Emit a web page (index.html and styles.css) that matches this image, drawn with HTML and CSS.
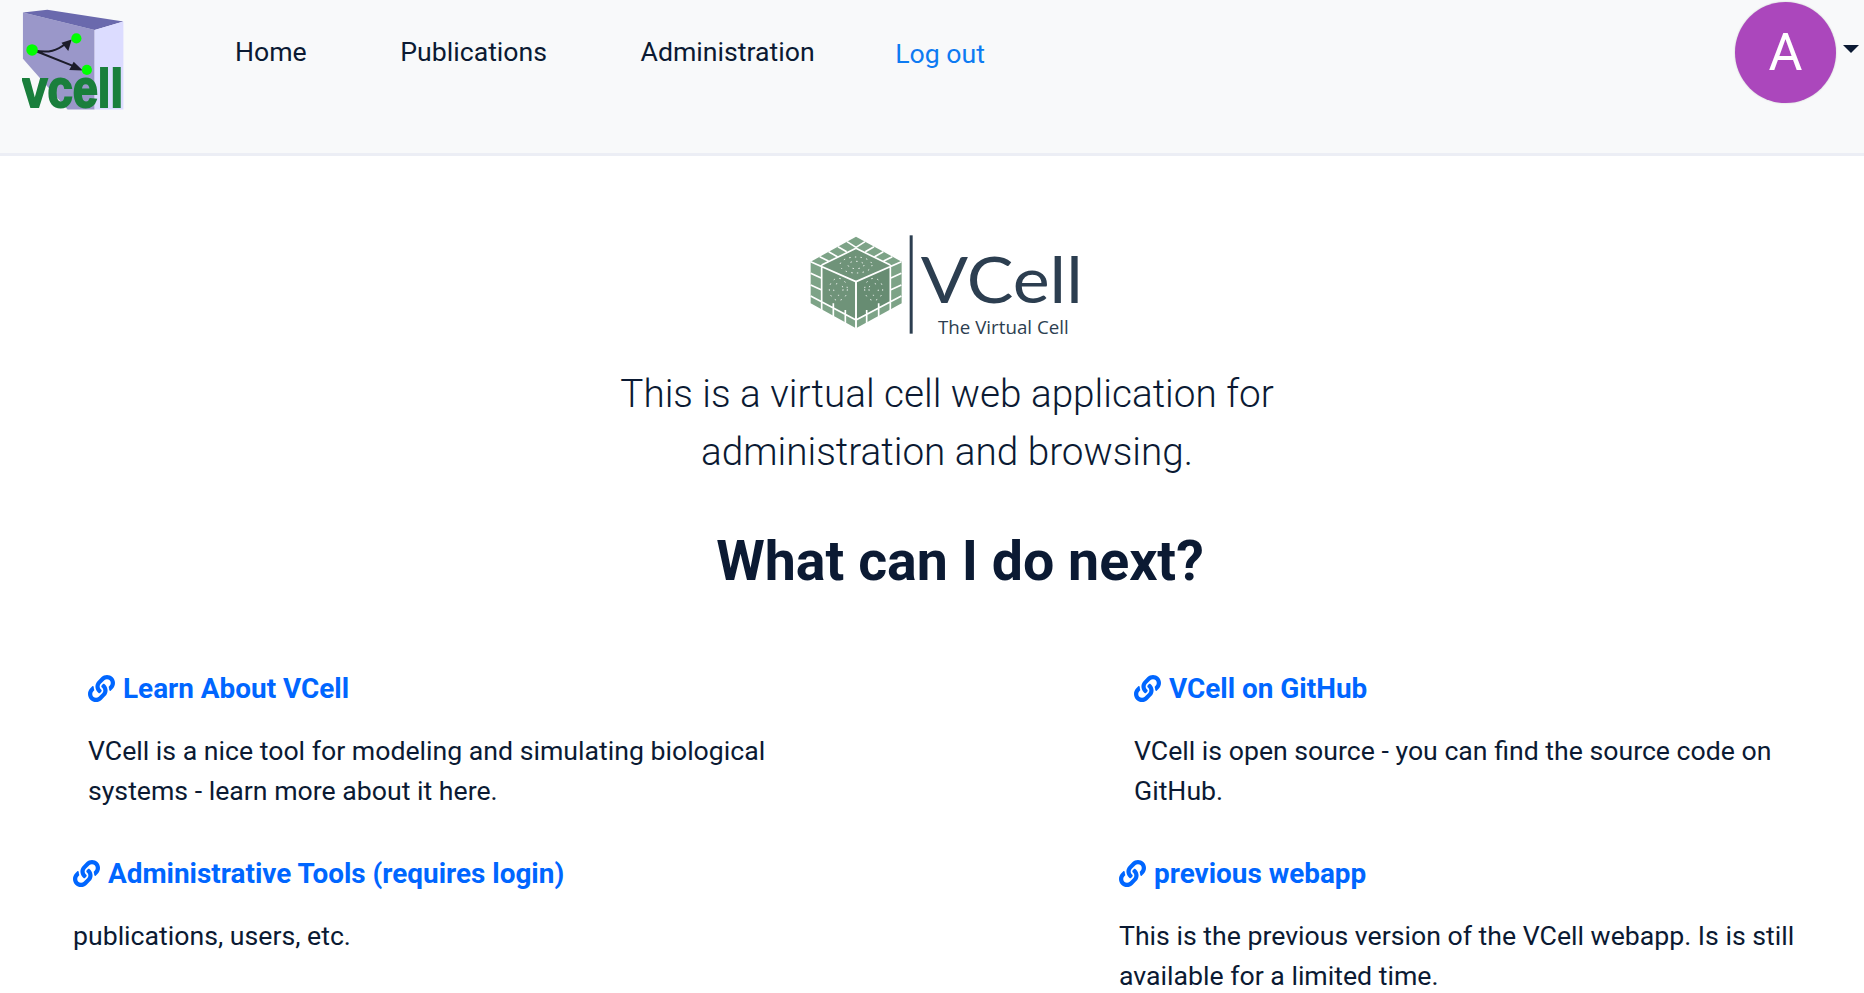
FILE: index.html
```html
<!DOCTYPE html>
<html lang="en">
<head>
    <meta charset="UTF-8">
    <meta name="viewport" content="width=device-width, initial-scale=1.0">
    <title>VCell</title>
    <link rel="stylesheet" href="styles.css">
</head>
<body>

    <svg class="icon-defs" width="0" height="0">
        <symbol id="link-icon" viewBox="0 0 512 512">
            <path fill="currentColor" d="M326.612 185.391c59.747 59.809 58.927 155.698.36 214.59-.11.12-.24.25-.36.37l-67.2 67.2c-59.27 59.27-155.699 59.262-214.96 0-59.27-59.26-59.27-155.7 0-214.96l37.106-37.106c9.84-9.84 26.786-3.3 27.294 10.606.648 17.722 3.826 35.527 9.69 52.721 1.986 5.822.567 12.262-3.783 16.612l-13.087 13.087c-28.026 28.026-28.905 73.66-1.155 101.96 28.024 28.579 74.086 28.749 102.325.51l67.2-67.19c28.191-28.191 28.073-73.757 0-101.83-3.701-3.694-7.429-6.564-10.341-8.569a16.037 16.037 0 0 1-6.947-12.606c-.396-10.567 3.348-21.456 11.698-29.806l21.054-21.055c5.521-5.521 14.182-6.199 20.584-1.731a152.482 152.482 0 0 1 20.522 17.197zM467.547 44.449c-59.261-59.262-155.69-59.27-214.96 0l-67.2 67.2c-.12.12-.25.25-.36.37-58.566 58.892-59.387 154.781.36 214.59a152.454 152.454 0 0 0 20.521 17.196c6.402 4.468 15.064 3.789 20.584-1.731l21.054-21.055c8.35-8.35 12.094-19.239 11.698-29.806a16.037 16.037 0 0 0-6.947-12.606c-2.912-2.005-6.64-4.875-10.341-8.569-28.073-28.073-28.191-73.639 0-101.83l67.2-67.19c28.239-28.239 74.3-28.069 102.325.51 27.75 28.3 26.872 73.934-1.155 101.96l-13.087 13.087c-4.35 4.35-5.769 10.79-3.783 16.612 5.864 17.194 9.042 34.999 9.69 52.721.509 13.906 17.454 20.446 27.294 10.606l37.106-37.106c59.271-59.259 59.271-155.699.001-214.959z"/>
        </symbol>
    </svg>

    <nav class="navbar">
        <svg class="brand" viewBox="66 28 300 340" width="102" height="115">
            <polygon fill="#9a97c9" points="68,38 280,90 280,325 200,325 68,175"/>
            <polygon fill="#6a69ad" points="68,38 140,30 365,65 280,90"/>
            <polygon fill="#dcdcff" points="280,90 365,65 365,325 280,325"/>
            <path fill="none" stroke="#1c1c2a" stroke-width="6" d="M100 150 C145 160 170 150 195 130 M100 150 L225 200"/>
            <polygon fill="#1c1c2a" points="212,118 202,152 182,128"/>
            <polygon fill="#1c1c2a" points="245,210 205,208 218,184"/>
            <circle fill="#00ff00" cx="95" cy="149" r="17"/>
            <circle fill="#00ff00" cx="226" cy="115" r="15"/>
            <circle fill="#00ff00" cx="257" cy="208" r="15"/>
            <text class="brand-text" x="66" y="267" transform="scale(1 1.19)">vcell</text>
        </svg>
        <div class="nav-links">
            <a class="nav-link" href="#">Home</a>
            <a class="nav-link" href="#">Publications</a>
            <a class="nav-link" href="#">Administration</a>
            <a class="nav-link logout" href="#">Log out</a>
        </div>
        <div class="user-menu">
            <div class="avatar">A</div>
            <span class="caret"></span>
        </div>
    </nav>

    <main class="content">
        <svg class="hero-logo" viewBox="0 0 960 390" width="320" height="130">
            <defs>
                <g id="cube-half">
                    <path fill="none" stroke="#fff" stroke-width="5" d="M228 85 L125 135 M92 125 L228 185 L228 325 M125 135 L125 270 M92 228 L228 300 M201 65 L228 82 M174 80 L200 95 M146 95 L172 110 M119 110 L145 123 M92 160 L125 175 M92 195 L125 210 M160 250 L160 290 M196 270 L196 310"/>
                    <ellipse cx="175" cy="208" rx="27" ry="33" fill="none" stroke="#fff" stroke-width="3" stroke-dasharray="4 14"/>
                    <ellipse cx="175" cy="208" rx="14" ry="18" fill="none" stroke="#fff" stroke-width="3" stroke-dasharray="4 18"/>
                </g>
            </defs>
            <polygon fill="#7da387" points="228,50 365,125 365,250 228,325 92,250 92,125"/>
            <polygon fill="#6f9379" points="125,135 228,185 228,297 125,245"/>
            <polygon fill="#678c72" points="331,135 228,185 228,297 331,245"/>
            <polygon fill="#6f9379" points="228,85 331,135 228,185 125,135"/>
            <use href="#cube-half"/>
            <use href="#cube-half" transform="matrix(-1 0 0 1 456 0)"/>
            <ellipse cx="228" cy="135" rx="48" ry="24" fill="none" stroke="#fff" stroke-width="3" stroke-dasharray="4 13"/>
            <ellipse cx="228" cy="135" rx="24" ry="11" fill="none" stroke="#fff" stroke-width="3" stroke-dasharray="4 13"/>
            <rect x="389" y="46" width="9" height="295" fill="#2c3e50"/>
            <text class="hero-logo-name" x="422" y="250" textLength="486" lengthAdjust="spacingAndGlyphs">VCell</text>
            <text class="hero-logo-sub" x="474" y="343" textLength="392" lengthAdjust="spacingAndGlyphs">The Virtual Cell</text>
        </svg>

        <p class="intro">This is a virtual cell web application for<br>administration and browsing.</p>

        <h1 class="next-title">What can I do next?</h1>

        <div class="cards">
            <section class="card card-inset">
                <h3 class="card-title"><svg class="link-icon"><use href="#link-icon"/></svg><a href="#">Learn About VCell</a></h3>
                <p>VCell is a nice tool for modeling and simulating biological systems - learn more about it here.</p>
            </section>
            <section class="card card-inset">
                <h3 class="card-title"><svg class="link-icon"><use href="#link-icon"/></svg><a href="#">VCell on GitHub</a></h3>
                <p>VCell is open source - you can find the source code on GitHub.</p>
            </section>
            <section class="card">
                <h3 class="card-title"><svg class="link-icon"><use href="#link-icon"/></svg><a href="#">Administrative Tools (requires login)</a></h3>
                <p>publications, users, etc.</p>
            </section>
            <section class="card">
                <h3 class="card-title"><svg class="link-icon"><use href="#link-icon"/></svg><a href="#">previous webapp</a></h3>
                <p>This is the previous version of the VCell webapp. Is is still available for a limited time.</p>
            </section>
        </div>
    </main>

</body>
</html>
```

FILE: styles.css
```css
html, body {
    height: 100%;
    overflow: hidden;
}

body {
    margin: 0;
    font-family: Roboto, sans-serif;
    color: #0b1a33;
    background-color: #ffffff;
}

a {
    text-decoration: none;
}

.icon-defs {
    position: absolute;
}

.navbar {
    display: flex;
    height: 153px;
    background-color: #f8f9fa;
    border-bottom: 3px solid #eceef5;
}

.brand {
    margin: 9px 0 0 22px;
    flex-shrink: 0;
}

.nav-links {
    display: flex;
    align-items: flex-start;
    gap: 93.5px;
    margin-left: 111px;
    padding-top: 37px;
}

.nav-link {
    font-size: 26.67px;
    line-height: 31px;
    color: #0b1a33;
}

.logout {
    margin: 2px 0 0 -13px;
    color: #0d7bf2;
}

.user-menu {
    display: flex;
    align-items: flex-start;
    margin-left: auto;
    padding: 2px 5px 0 0;
}

.avatar {
    width: 101px;
    height: 101px;
    border-radius: 50%;
    background-color: #ab47bc;
    color: #ffffff;
    font-size: 52px;
    line-height: 101px;
    text-align: center;
    box-shadow: 0 0 2px rgba(0, 0, 0, 0.2);
}

.caret {
    margin: 43px 0 0 7px;
    border-top: 8px solid #0b1a33;
    border-left: 8px solid transparent;
    border-right: 8px solid transparent;
}

.content {
    padding-top: 64px;
}

.hero-logo {
    display: block;
    margin-left: 780px;
}

.hero-logo-name {
    font-family: Lato, sans-serif;
    font-size: 190px;
    fill: #2c3e50;
}

.hero-logo-sub {
    font-family: "Open Sans", sans-serif;
    font-size: 54px;
    fill: #2c3e50;
}

.brand-text {
    font-family: "Liberation Sans", sans-serif;
    font-weight: 700;
    font-size: 134px;
    fill: #1a7f3c;
    stroke: #1a7f3c;
    stroke-width: 5px;
}

.intro {
    width: 800px;
    margin: 15px 0 0 547px;
    font-size: 38.7px;
    font-weight: 300;
    line-height: 58px;
    text-align: center;
}

.next-title {
    margin: 49.5px 0 0 56px;
    font-size: 55.5px;
    font-weight: 700;
    line-height: 62px;
    text-align: center;
}

.cards {
    display: grid;
    grid-template-columns: 1046px 1fr;
    grid-auto-rows: 185px;
    margin-top: 76px;
    padding-left: 73px;
}

.card {
    width: 720px;
}

.card-inset {
    padding-left: 15px;
}

.card-title {
    display: flex;
    align-items: center;
    gap: 8px;
    margin: 0;
    font-size: 27.9px;
    font-weight: 700;
    line-height: 40px;
    color: #0066ff;
}

.card-title a {
    color: inherit;
}

.link-icon {
    width: 27px;
    height: 27px;
}

.card p {
    margin: 22px 0 0;
    font-size: 26.67px;
    line-height: 40px;
}
```
